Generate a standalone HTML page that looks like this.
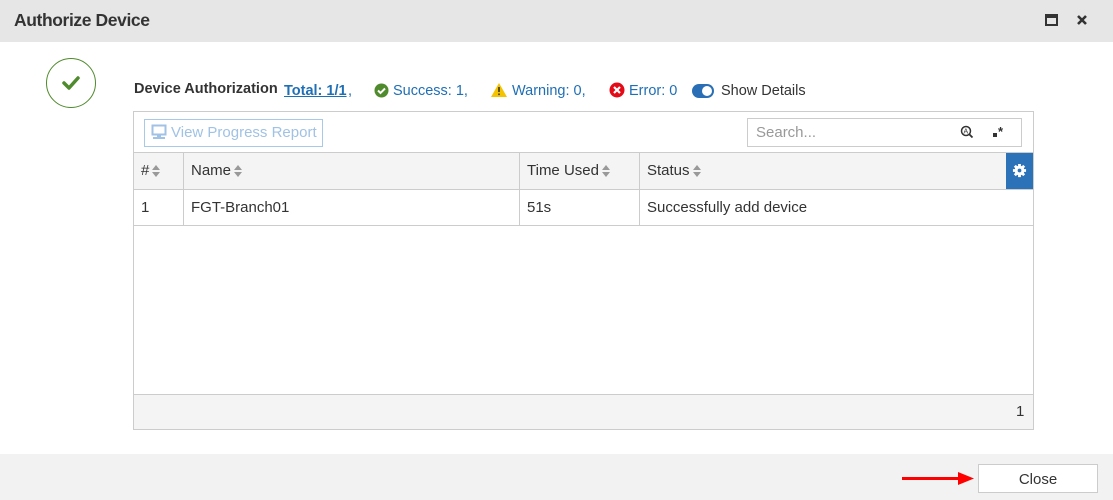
<!DOCTYPE html>
<html><head><style>
*{box-sizing:border-box;margin:0;padding:0}
body{width:1113px;height:500px;position:relative;background:#fff;font-family:"Liberation Sans",sans-serif;color:#333;overflow:hidden}
.hdr{position:absolute;left:0;top:0;width:1113px;height:42px;background:#e6e6e6}
.hdr .t{position:absolute;left:14px;top:10px;font-size:17.5px;font-weight:bold;color:#333;letter-spacing:-0.4px}
.ftr{position:absolute;left:0;top:454px;width:1113px;height:46px;background:#f2f2f2}
.abs{position:absolute}
.tbl{position:absolute;left:133px;top:111px;width:901px;height:319px;border:1px solid #ccc}
.blue{color:#1f6fb5}
.vl{position:absolute;width:1px;background:#ccc}
.hl{position:absolute;height:1px;background:#ccc}
.sort{display:inline-block;vertical-align:middle;margin-left:3px;width:9px;height:12px;position:relative}
.sort:before{content:"";position:absolute;left:0;top:0;border-left:4.5px solid transparent;border-right:4.5px solid transparent;border-bottom:5px solid #999}
.sort:after{content:"";position:absolute;left:0;top:7px;border-left:4.5px solid transparent;border-right:4.5px solid transparent;border-top:5px solid #999}
.cell{position:absolute;font-size:15px;color:#333}
</style></head><body>
<div class="hdr"><div class="t">Authorize Device</div>
<div class="abs" style="left:1045px;top:14px;width:13px;height:12px;border:2px solid #333;border-top-width:4px"></div>
<svg class="abs" style="left:1077px;top:15px" width="10" height="10"><path d="M1 1l8 8M9 1l-8 8" stroke="#333" stroke-width="2.6"/></svg>
</div>
<div class="abs" style="left:46px;top:58px;width:50px;height:50px;border:1.5px solid #4f8a2c;border-radius:50%">
<svg width="50" height="50" style="position:absolute;left:-1.5px;top:-1.5px"><path d="M18 25 L23 30 L32 20" stroke="#4f8a2c" stroke-width="3.5" fill="none" stroke-linecap="round" stroke-linejoin="round"/></svg></div>
<div class="abs" style="left:134px;top:81px;font-size:14.5px;font-weight:bold;color:#333">Device Authorization</div>
<div class="abs blue" style="left:284px;top:83px;font-size:14.5px;font-weight:bold;text-decoration:underline">Total: 1/1</div>
<div class="abs blue" style="left:348px;top:83px;font-size:14.5px">,</div>
<svg class="abs" style="left:374px;top:83px" width="15" height="15"><circle cx="7.5" cy="7.5" r="7" fill="#4f8a2c"/><path d="M4 7.5l2.5 2.5 4.5-4.5" stroke="#fff" stroke-width="2" fill="none"/></svg>
<div class="abs blue" style="left:393px;top:83px;font-size:14.5px">Success: 1,</div>
<svg class="abs" style="left:491px;top:83px" width="16" height="14"><path d="M8 0L16 14H0Z" fill="#f5c400"/><rect x="7.2" y="4" width="1.6" height="5" fill="#333"/><rect x="7.2" y="10.5" width="1.6" height="1.6" fill="#333"/></svg>
<div class="abs blue" style="left:512px;top:83px;font-size:14.5px">Warning: 0,</div>
<svg class="abs" style="left:609px;top:82px" width="16" height="16"><circle cx="8" cy="8" r="7.5" fill="#e30b17"/><path d="M5 5l6 6M11 5l-6 6" stroke="#fff" stroke-width="2.2"/></svg>
<div class="abs blue" style="left:629px;top:83px;font-size:14.5px">Error: 0</div>
<div class="abs" style="left:692px;top:84px;width:22px;height:14px;border-radius:7px;background:#2a6fb5"><div style="position:absolute;left:10px;top:2px;width:10px;height:10px;border-radius:50%;background:#fff"></div></div>
<div class="abs" style="left:721px;top:83px;font-size:14.5px;color:#333">Show Details</div>

<div class="tbl"></div>
<div class="abs" style="left:144px;top:119px;width:179px;height:28px;border:1px solid #a9c9e8;color:#a0c2e4;font-size:15px;padding:4px 0 0 26px">View Progress Report</div>
<svg class="abs" style="left:151px;top:124px" width="16" height="16"><rect x="1.5" y="1.5" width="13" height="9" fill="none" stroke="#a0c2e4" stroke-width="2"/><rect x="6" y="11" width="4" height="2" fill="#a0c2e4"/><rect x="2" y="13" width="12" height="2" fill="#a0c2e4"/></svg>
<div class="abs" style="left:747px;top:118px;width:275px;height:29px;border:1px solid #ccc;font-size:15px;color:#999;padding:5px 0 0 8px">Search...</div>
<svg class="abs" style="left:960px;top:125px" width="14" height="14"><circle cx="6" cy="6" r="4.5" stroke="#333" stroke-width="1.5" fill="none"/><path d="M9 9l3.5 3.5" stroke="#333" stroke-width="1.8"/><text x="3.5" y="8.5" font-size="7" font-family="Liberation Sans" fill="#333">A</text></svg>
<div class="abs" style="left:993px;top:133px;width:4px;height:4px;background:#333"></div>
<div class="abs" style="left:998px;top:124px;font-size:13px;font-weight:bold;color:#333">*</div>

<div class="abs" style="left:134px;top:153px;width:899px;height:36px;background:#f4f4f4"></div>
<div class="hl" style="left:134px;top:152px;width:899px"></div>
<div class="hl" style="left:134px;top:189px;width:899px"></div>
<div class="hl" style="left:134px;top:225px;width:899px"></div>
<div class="vl" style="left:183px;top:152px;height:73px"></div>
<div class="vl" style="left:519px;top:152px;height:73px"></div>
<div class="vl" style="left:639px;top:152px;height:73px"></div>
<div class="abs" style="left:1006px;top:153px;width:27px;height:36px;background:#2c72b9"></div>
<svg class="abs" style="left:1012px;top:163px" width="15" height="15" viewBox="0 0 16 16"><g fill="#fff"><circle cx="8" cy="8" r="5.2"/><g stroke="#fff" stroke-width="3"><path d="M8 1v14M1 8h14M3 3l10 10M13 3L3 13"/></g></g><circle cx="8" cy="8" r="2" fill="#2c72b9"/></svg>
<div class="cell" style="left:141px;top:162px">#<span class="sort"></span></div>
<div class="cell" style="left:191px;top:162px">Name<span class="sort"></span></div>
<div class="cell" style="left:527px;top:162px">Time Used<span class="sort"></span></div>
<div class="cell" style="left:647px;top:162px">Status<span class="sort"></span></div>
<div class="cell" style="left:141px;top:199px">1</div>
<div class="cell" style="left:191px;top:199px">FGT-Branch01</div>
<div class="cell" style="left:527px;top:199px">51s</div>
<div class="cell" style="left:647px;top:199px">Successfully add device</div>
<div class="abs" style="left:134px;top:394px;width:899px;height:35px;background:#f4f4f4;border-top:1px solid #ccc"></div>
<div class="cell" style="left:1016px;top:403px">1</div>

<div class="ftr"></div>
<div class="abs" style="left:902px;top:477px;width:60px;height:3px;background:#f00"></div>
<svg class="abs" style="left:958px;top:472px" width="16" height="13"><path d="M0 0L16 6.5L0 13Z" fill="#f00"/></svg>
<div class="abs" style="left:978px;top:464px;width:120px;height:29px;background:#fff;border:1px solid #ccc;font-size:15px;text-align:center;padding-top:6px;color:#333">Close</div>
</body></html>
